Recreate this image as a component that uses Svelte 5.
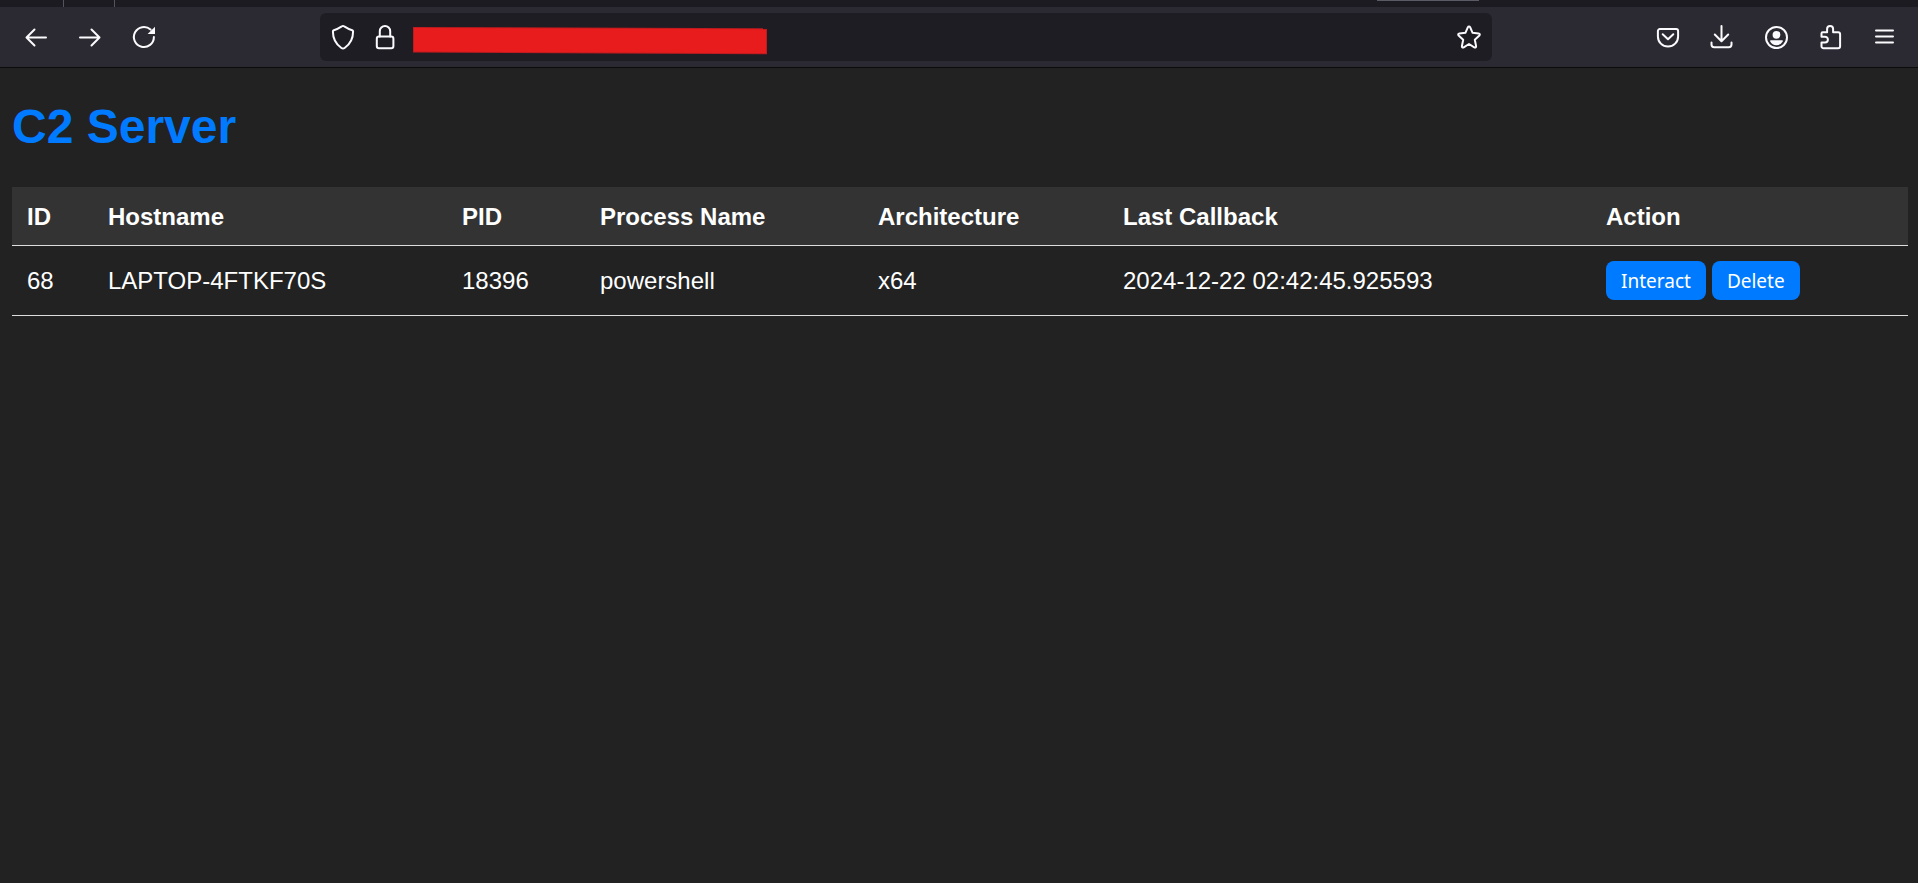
<script>
  const columns = [
    { label: 'ID', share: 81 },
    { label: 'Hostname', share: 354 },
    { label: 'PID', share: 138 },
    { label: 'Process Name', share: 278 },
    { label: 'Architecture', share: 245 },
    { label: 'Last Callback', share: 483 },
    { label: 'Action', share: 317 }
  ];
  const total = columns.reduce((sum, c) => sum + c.share, 0);

  const agents = [
    {
      id: 68,
      hostname: 'LAPTOP-4FTKF70S',
      pid: 18396,
      process: 'powershell',
      arch: 'x64',
      last: '2024-12-22 02:42:45.925593'
    }
  ];
</script>

<div class="tabs">
  <span class="tab-first"></span>
  <span class="tab-second"></span>
  <span class="tab-rest"></span>
  <span class="tab-active"></span>
  <span class="tab-end"></span>
</div>

<nav class="toolbar">
  <div class="side start">
    <button class="tool" aria-label="Back">
      <svg viewBox="0 0 28 28"><path d="M24 14.5H4.5M12.5 6.5l-8 8 8 8" /></svg>
    </button>
    <button class="tool" aria-label="Forward">
      <svg viewBox="0 0 28 28"><path d="M4 14.5h19.5M15.5 6.5l8 8-8 8" /></svg>
    </button>
    <button class="tool" aria-label="Reload">
      <svg viewBox="0 0 28 28">
        <path d="M23.9 14a10 10 0 1 1-3.3-7.4" />
        <path class="solid" d="M25 3.800v7.200h-7.400z" />
      </svg>
    </button>
  </div>

  <div class="address">
    <button class="inner" aria-label="Tracking protection">
      <svg viewBox="0 0 28 28"><path d="M14 2.900c.5 0 .8.1 1.200.4 2.600 1.700 5 2.900 8 3.900.6.200.900.700.900 1.300 0 6.800-2.700 12.500-8.500 16.500-.600.400-1 .600-1.600.6s-1-.2-1.600-.6C6.600 21 3.900 15.300 3.900 8.500c0-.6.300-1.100.9-1.300 3-1 5.400-2.200 8-3.900.4-.3.700-.4 1.200-.4z" /></svg>
    </button>
    <button class="inner" aria-label="Site information">
      <svg viewBox="0 0 28 28">
        <path d="M8.800 13.500V8.200a5.200 5.200 0 0 1 10.400 0v5.300" />
        <rect x="5.800" y="13.500" width="16.600" height="11.700" rx="2.200" />
      </svg>
    </button>
    <svg class="redacted" viewBox="0 0 354 28" preserveAspectRatio="none" aria-hidden="true">
      <path class="edge" d="M0 0L354 1.300V27.200L0 25.600z" />
      <path class="fill" d="M1 1L353 2.300V26.200L1 24.600z" />
    </svg>
    <input type="text" aria-label="Address" />
    <button class="inner" aria-label="Bookmark this page">
      <svg viewBox="0 0 28 28"><path d="M12.900 4.200c.5-1 1.700-1 2.200 0l2.500 5.600 6 .6c1.200.1 1.600 1.300.8 2.100l-4.600 4.200 1.300 6.400c.2 1.100-.8 1.800-1.800 1.200L14 21l-5.300 3.300c-1 .6-2-.1-1.800-1.200l1.300-6.400-4.600-4.200c-.8-.8-.4-2 .8-2.100l6-.6z" /></svg>
    </button>
  </div>

  <div class="side end">
    <button class="tool" aria-label="Save to Pocket">
      <svg viewBox="0 0 28 28"><path d="M5.900 6h16.200c1.100 0 2 .9 2 2v5.500a10.100 10.100 0 0 1-20.200 0V8c0-1.100.9-2 2-2zM8.700 11.300l5.300 5 5.300-5" /></svg>
    </button>
    <button class="tool" aria-label="Downloads">
      <svg viewBox="0 0 28 28"><path d="M13.500 3v15M6.800 11.500l6.700 6.700 6.700-6.700M3.500 19.500v2c0 1.500 1.200 2.700 2.700 2.700h14.600c1.500 0 2.700-1.200 2.700-2.700v-2" /></svg>
    </button>
    <button class="tool" aria-label="Account">
      <svg viewBox="0 0 28 28">
        <circle cx="14.500" cy="14.500" r="10.500" />
        <circle class="solid" cx="14.500" cy="11.800" r="3.900" />
        <path class="solid" d="M8.800 17.300h11.400c.6 0 .9.500.7 1a7.200 7.200 0 0 1-12.800 0c-.2-.5.100-1 .7-1z" />
      </svg>
    </button>
    <button class="tool" aria-label="Extensions">
      <svg viewBox="0 0 28 28"><path d="M6.700 9.200h4.400V6a3 3 0 0 1 6 0v3.200h5c1.100 0 2 .9 2 2v12c0 1.100-.9 2-2 2H7.500c-1.100 0-2-.9-2-2v-3.700H9a2.900 2.900 0 0 0 0-5.800H5.500v-3.300c0-.7.500-1.200 1.200-1.200z" /></svg>
    </button>
    <button class="tool" aria-label="Open menu">
      <svg viewBox="0 0 28 28"><path d="M6 7.500h17M6 13.500h17M6 19.500h17" /></svg>
    </button>
  </div>
</nav>

<main>
  <h1>C2 Server</h1>
  <table>
    <colgroup>
      {#each columns as column}
        <col style:width="{(column.share / total) * 100}%" />
      {/each}
    </colgroup>
    <thead>
      <tr>
        {#each columns as column}
          <th scope="col">{column.label}</th>
        {/each}
      </tr>
    </thead>
    <tbody>
      {#each agents as agent}
        <tr>
          <td>{agent.id}</td>
          <td>{agent.hostname}</td>
          <td>{agent.pid}</td>
          <td>{agent.process}</td>
          <td>{agent.arch}</td>
          <td>{agent.last}</td>
          <td>
            <div class="actions">
              <button class="action">Interact</button>
              <button class="action">Delete</button>
            </div>
          </td>
        </tr>
      {/each}
    </tbody>
  </table>
</main>

<style>
  :global(body) {
    background: #222;
    color: #fff;
    font-family: 'Liberation Sans', Arial, sans-serif;
    font-size: 24px;
    line-height: 28px;
  }

  button {
    border: 0;
    cursor: pointer;
  }

  .tabs {
    display: flex;
    height: 7px;
    background: #1c1b22;
  }

  .tab-first {
    width: 63px;
    border-right: 1px solid #55545d;
  }

  .tab-second {
    width: 50px;
    border-right: 1px solid #55545d;
  }

  .tab-rest {
    flex: 1262;
  }

  .tab-active {
    flex: 102;
    height: 1px;
    background: #5b5b66;
  }

  .tab-end {
    flex: 439;
  }

  .toolbar {
    display: flex;
    align-items: center;
    height: 60px;
    background: #2b2a33;
    border-bottom: 1px solid #0c0c0d;
  }

  .side {
    display: flex;
    box-sizing: border-box;
  }

  .start {
    width: 320px;
    padding-left: 9px;
  }

  .end {
    width: 426px;
    justify-content: flex-end;
    padding-right: 7px;
  }

  .tool {
    display: flex;
    justify-content: center;
    align-items: center;
    width: 54px;
    height: 48px;
    padding: 0;
    background: none;
  }

  .inner {
    display: flex;
    padding: 0;
    background: none;
  }

  svg {
    width: 28px;
    height: 28px;
    fill: none;
    stroke: #fbfbfe;
    stroke-width: 2;
    stroke-linecap: round;
    stroke-linejoin: round;
  }

  .solid {
    fill: #fbfbfe;
    stroke: none;
  }

  .address {
    display: flex;
    flex: 1;
    align-items: center;
    gap: 14px;
    height: 48px;
    box-sizing: border-box;
    padding: 0 9px;
    border-radius: 6px;
    background: #1e1d24;
  }

  .redacted {
    width: 354px;
    height: 28px;
    padding-top: 8px;
    stroke: none;
  }

  .edge {
    fill: #bd1b20;
  }

  .fill {
    fill: #e81c1c;
  }

  input {
    flex: 1;
    min-width: 0;
    border: 0;
    outline: 0;
    background: none;
    color: #fbfbfe;
    font: inherit;
  }

  main {
    padding: 31px 10px 12px 12px;
  }

  h1 {
    margin: 0 0 33px;
    color: #007bff;
    font-size: 48px;
    line-height: 55px;
  }

  table {
    width: 100%;
    table-layout: fixed;
    border-collapse: collapse;
  }

  th,
  td {
    padding: 15px;
    border-bottom: 1px solid #ddd;
    text-align: left;
  }

  th {
    padding: 16px 15px 14px;
    background: #333;
  }

  .actions {
    display: flex;
    gap: 6px;
  }

  .action {
    padding: 7px 15px 5px;
    border-radius: 8px;
    background: #007bff;
    color: #fff;
    font-family: 'Noto Sans', sans-serif;
    font-size: 19px;
    line-height: 27px;
  }
</style>
